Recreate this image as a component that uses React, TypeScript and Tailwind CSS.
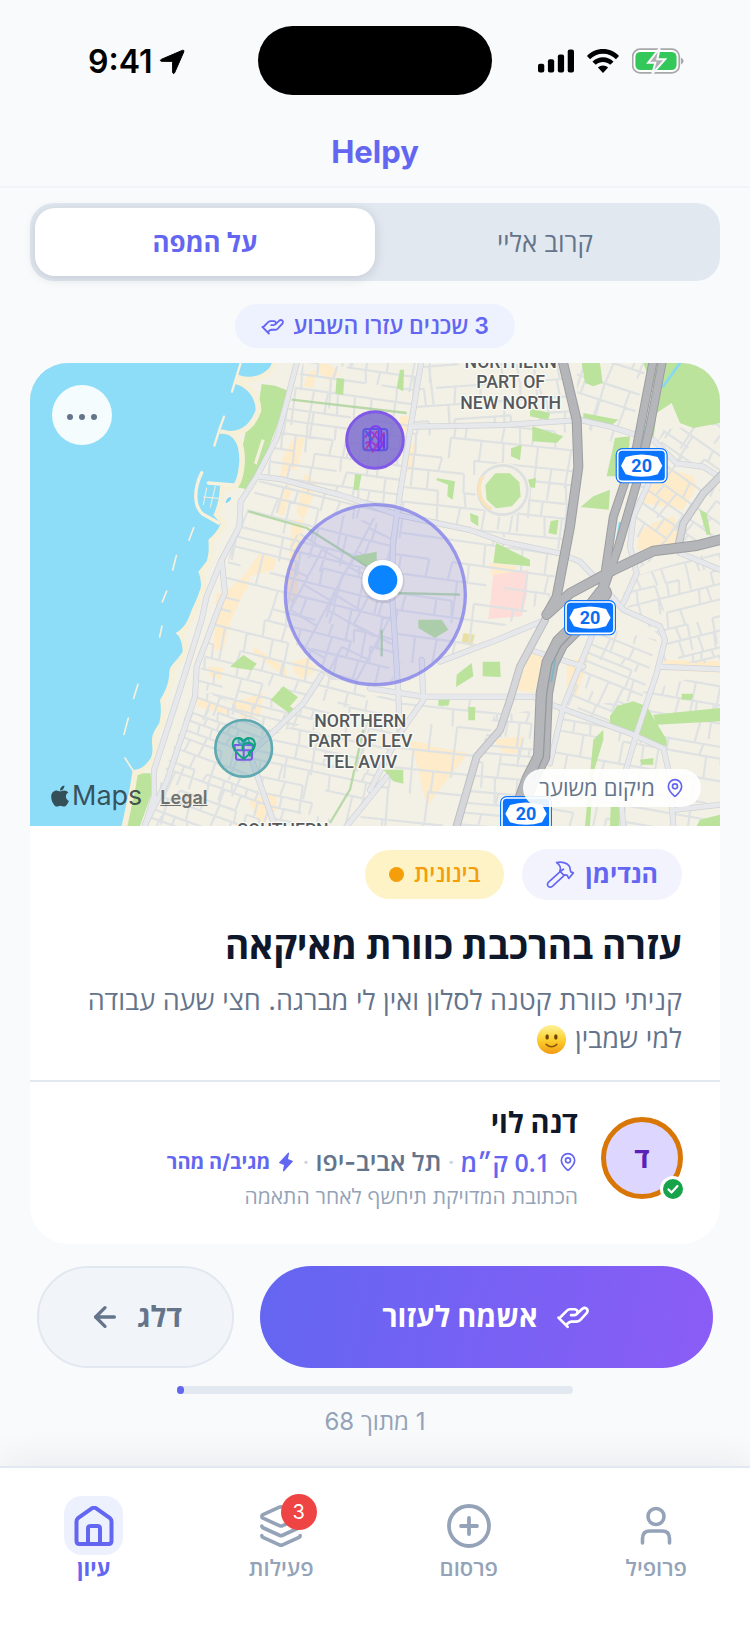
import React from "react";
import { ArrowLeft, CirclePlus, Layers, MapPin } from "lucide-react";
import { PiLightningFill } from "react-icons/pi";
import { FaApple } from "react-icons/fa";

/* ---------- icons ---------- */

function HandIcon({ className }: { className?: string }) {
  return (
    <svg viewBox="588 106 110 78" className={className} fill="none" stroke="currentColor" strokeWidth="8.5" strokeLinecap="round" strokeLinejoin="round" aria-hidden="true">
      <path d="M594 147L624 177" />
      <path d="M601 145L621 125Q626 120 632 120H647Q656 121 656 129Q655 138 646 139H635" />
      <path d="M656 133L672 118Q679 113 686 118Q691 124 687 131L667 153Q661 160 653 160H636Q629 161 624 166L620 170" />
    </svg>
  );
}

function HammerIcon({ className }: { className?: string }) {
  return (
    <svg viewBox="528 47 88 86" className={className} fill="none" stroke="currentColor" strokeWidth="5" strokeLinecap="round" strokeLinejoin="round" aria-hidden="true">
      <path d="M571 81L535 114Q530 121 535 126Q541 131 548 125L585 91" />
      <path d="M560 54C574 50 592 54 599 65C602 71 601 76 603 82L611 85L597 102L592 92L581 91L570 80C574 71 571 61 560 54Z" />
      <path d="M571 81L581 74" />
    </svg>
  );
}

function HomeIcon({ className }: { className?: string }) {
  return (
    <svg viewBox="0 0 40 40" className={className} fill="none" stroke="currentColor" strokeWidth="4" strokeLinejoin="round" strokeLinecap="round" aria-hidden="true">
      <path d="M2.500 15.500Q2.500 13.500 4 12.200L17.800 2.400Q20 1.100 22.200 2.400L36 12.200Q37.500 13.500 37.500 15.500V35Q37.500 38 34.500 38H5.500Q2.500 38 2.500 35Z" />
      <path d="M14 37.500V22.500Q14 20 16.500 20H23.500Q26 20 26 22.500V37.500" />
    </svg>
  );
}

function PersonIcon({ className }: { className?: string }) {
  return (
    <svg viewBox="0 0 40 40" className={className} fill="none" stroke="currentColor" strokeWidth="3.6" strokeLinecap="round" aria-hidden="true">
      <circle cx="20" cy="10.500" r="8" />
      <path d="M6.500 37V32.500Q6.500 25 14 25H26Q33.500 25 33.500 32.500V37" />
    </svg>
  );
}

function SmileIcon({ className }: { className?: string }) {
  return (
    <svg viewBox="0 0 32 32" className={className} role="img" aria-label="🙂">
      <defs>
        <linearGradient id="smile" x1="0" y1="0" x2="0" y2="1">
          <stop offset="0" stopColor="#fdf29a" />
          <stop offset=".5" stopColor="#fcd12f" />
          <stop offset="1" stopColor="#f29a13" />
        </linearGradient>
      </defs>
      <circle cx="16" cy="16" r="15" fill="url(#smile)" />
      <ellipse cx="11.500" cy="13.500" rx="1.800" ry="2.800" fill="#6f4309" />
      <ellipse cx="20.500" cy="13.500" rx="1.800" ry="2.800" fill="#6f4309" />
      <path d="M10.500 21Q16 26 21.500 21" fill="none" stroke="#8a540c" strokeWidth="1.600" strokeLinecap="round" />
    </svg>
  );
}

function StatusIcons() {
  return (
    <div className="flex items-center gap-[13px]">
      <svg viewBox="0 0 109 70" className="h-6 w-9" aria-hidden="true">
        <rect x="0" y="43" width="19" height="27" rx="6" />
        <rect x="30" y="30" width="19" height="40" rx="6" />
        <rect x="60" y="15" width="19" height="55" rx="6" />
        <rect x="90" y="0" width="19" height="70" rx="6" />
      </svg>
      <svg viewBox="0 0 94 70" className="h-6 w-8" aria-hidden="true">
        <path d="M47 0C65 0 82 8 94 20L85 30C75 20 62 14 47 14S19 20 9 30L0 20C12 8 29 0 47 0Z" />
        <path d="M47 24C59 24 70 29 78 37L68 46C62 41 55 38 47 38S32 41 26 46L16 37C24 29 35 24 47 24Z" />
        <path d="M47 48C53 48 58 50 62 54L47 70L32 54C36 50 41 48 47 48Z" />
      </svg>
      <svg viewBox="0 0 154 76" className="h-[26px] w-[52px]" aria-hidden="true">
        <rect x="2" y="3" width="138" height="70" rx="22" fill="#fff" stroke="#a8a8aa" strokeWidth="5" />
        <path d="M145 28Q153 33 153 38T145 48Z" fill="#a8a8aa" />
        <rect x="10" y="11" width="122" height="54" rx="15" fill="#34c759" />
        <path d="M82 0L48 43H69L60 76L98 33H75Z" fill="#b0b0b3" stroke="#f8fafc" strokeWidth="6" />
      </svg>
    </div>
  );
}

/* ---------- map ---------- */

function random(seed: number) {
  let a = seed;
  return () => {
    a = (a * 1664525 + 1013904223) % 4294967296;
    return a / 4294967296;
  };
}

/* Irregular blocks: long rows joined by short cross streets. */
function blockPath(seed: number, size: number, dx: number, dy: number) {
  const r = random(seed);
  const parts: string[] = [];
  let y = -size;
  while (y < size) {
    const next = y + dy * (0.6 + r() * 0.8);
    let x = -size;
    let pen = false;
    while (x < size) {
      const nx = x + dx * (0.5 + r());
      if (r() < 0.84) {
        parts.push(`${pen ? "" : `M${x | 0} ${y | 0}`}L${nx | 0} ${y | 0}`);
        pen = true;
      } else pen = false;
      if (r() < 0.75) {
        const lean = (r() - 0.5) * 16;
        parts.push(`M${nx | 0} ${y | 0}L${(nx + lean) | 0} ${(next + (r() < 0.3 ? dy : 0)) | 0}`);
        pen = false;
      }
      x = nx;
    }
    y = next;
  }
  return parts.join("");
}

const districts = [
  { id: "nw", area: "820,0 1170,0 1105,440 1000,415 700,345", x: 920, y: 220, angle: 8, seed: 7, dx: 58, dy: 48, size: 420 },
  { id: "w", area: "690,350 1000,410 1100,450 1090,900 1000,1010 720,1120 500,960 580,690 600,560", x: 820, y: 700, angle: 14, seed: 21, dx: 70, dy: 42, size: 620 },
  { id: "w2", area: "780,520 1100,450 1090,960 900,950 780,800", x: 950, y: 720, angle: -62, seed: 5, dx: 90, dy: 70, size: 420 },
  { id: "sw", area: "500,960 720,1090 640,1200 740,1389 340,1389 410,1210", x: 560, y: 1200, angle: 20, seed: 33, dx: 46, dy: 36, size: 420 },
  { id: "s", area: "760,1100 1100,980 1110,1130 1040,1240 970,1389 740,1389 670,1180", x: 900, y: 1240, angle: 12, seed: 14, dx: 62, dy: 40, size: 420 },
  { id: "n", area: "1170,0 1600,0 1640,180 1150,195", x: 1400, y: 90, angle: -4, seed: 28, dx: 66, dy: 50, size: 420 },
  { id: "n2", area: "1150,200 1640,180 1640,320 1590,560 1110,455", x: 1380, y: 380, angle: 6, seed: 61, dx: 74, dy: 54, size: 420 },
  { id: "c", area: "1095,460 1590,570 1560,700 1250,900 1095,900", x: 1330, y: 690, angle: 8, seed: 45, dx: 84, dy: 66, size: 420 },
  { id: "sc", area: "1100,1010 1440,1010 1330,1190 1280,1389 980,1389 1060,1200", x: 1220, y: 1220, angle: 6, seed: 52, dx: 90, dy: 74, size: 320 },
  { id: "sc2", area: "1390,1060 1520,1040 1510,1270 1430,1389 1290,1389 1340,1190", x: 1400, y: 1220, angle: 5, seed: 18, dx: 50, dy: 34, size: 320 },
  { id: "ne", area: "1640,0 1850,0 1790,260 1640,180", x: 1740, y: 80, angle: 18, seed: 9, dx: 66, dy: 58, size: 300 },
  { id: "e", area: "1900,200 2070,180 2070,520 1900,570 1790,640 1830,340", x: 1950, y: 400, angle: 35, seed: 3, dx: 60, dy: 52, size: 400 },
  { id: "e2", area: "1780,650 2070,560 2070,900 1890,900 1900,830 1780,720", x: 1950, y: 740, angle: -14, seed: 77, dx: 44, dy: 36, size: 400 },
  { id: "se", area: "1690,790 1880,830 1810,1110 1590,1030", x: 1720, y: 950, angle: 22, seed: 40, dx: 60, dy: 34, size: 320 },
  { id: "se2", area: "1590,1060 2070,920 2070,1389 1540,1389", x: 1840, y: 1230, angle: 10, seed: 66, dx: 76, dy: 52, size: 500 },
];

const parks = [
  "695,63 735,68 775,83 740,191 690,321 650,379 622,373 628,301 650,191 688,111",
  "310,1231 362,1231 365,1291 330,1389 275,1389 300,1281",
  "600,911 640,876 680,902 665,922",
  "722,1010 760,970 804,1003 780,1030 800,1045 784,1055",
  "920,45 942,47 940,96 916,92",
  "975,333 995,336 985,382 970,380",
  "970,580 1040,566 1040,600 1005,610",
  "1655,0 1710,0 1718,60 1690,70 1665,60",
  "1500,136 1560,150 1555,172 1500,160",
  "1507,190 1600,220 1580,240 1507,235",
  "1443,256 1475,245 1470,292 1443,280",
  "1220,345 1275,355 1268,410 1252,400 1254,365 1220,352",
  "1487,352 1518,345 1515,375 1487,370",
  "1562,474 1586,470 1580,515 1555,510",
  "1320,450 1345,460 1345,490 1322,475",
  "1110,20 1122,20 1120,85 1100,75",
  "1690,400 1740,380 1736,440 1652,432",
  "1755,225 1800,220 1790,340 1730,340",
  "1840,0 2070,0 2070,180 1990,195 1950,180 1925,120 1880,150 1870,230 1840,240 1870,80",
  "1660,150 1765,170 1740,190 1660,172",
  "2008,440 2030,450 2042,515 2030,515",
  "1398,540 1500,590 1500,610 1390,600",
  "1165,770 1235,770 1255,800 1215,825 1165,795",
  "1358,896 1410,896 1412,942 1358,940",
  "1280,935 1325,900 1330,940 1278,972",
  "1315,1032 1336,1032 1335,1072 1315,1072",
  "1225,1010 1260,1010 1255,1028 1225,1028",
  "1060,1220 1120,1220 1120,1262 1090,1255",
  "1740,1060 1760,1030 1810,1015 1850,1030 1910,1130 1910,1150 1820,1125 1740,1080",
  "1870,1055 2070,1035 2070,1075 1880,1085",
  "1690,1130 1720,1100 1720,1130 1690,1230 1680,1389 1665,1389",
  "1742,1330 1770,1330 1768,1389 1740,1389",
  "1830,1190 1870,1185 1870,1205 1835,1205",
  "1955,992 1990,992 1985,1010 1955,1010",
  "2010,1370 2070,1355 2070,1389 2000,1389",
];

const tints = [
  "835,30 860,20 850,75 820,70",
  "860,0 900,5 925,30 900,60 870,30",
  "760,280 800,210 790,290 760,350 750,340",
  "800,225 825,225 800,320 782,320",
  "825,330 860,360 850,400 820,470 800,450",
  "770,360 785,380 760,460 742,450",
  "785,470 820,470 800,720 770,720",
  "640,640 690,570 740,590 730,620 660,640 650,680 600,720 550,720",
  "560,690 640,690 600,780 580,860 550,860",
  "500,1005 600,1035 595,1055 500,1030",
  "670,850 770,915 770,945 670,870",
  "790,895 830,885 860,920 820,950 790,925",
  "535,910 580,915 575,950 540,940",
  "600,1020 700,990 690,1060 640,1070",
  "660,1310 740,1290 740,1340 690,1389 660,1320",
  "1110,160 1140,160 1135,200 1110,210",
  "1120,250 1160,240 1150,310 1130,330",
  "1380,600 1460,610 1455,645 1385,640",
  "1910,315 1990,340 2000,370 1960,440 1840,420 1860,350",
  "1870,480 1930,460 1950,500 1940,560 1820,560 1830,500",
  "1500,870 1555,880 1510,990 1460,980",
  "1145,1140 1315,1170 1190,1330",
  "1130,1130 1210,1145 1150,1160",
  "1610,900 1680,870 1640,1000 1610,980",
  "1390,1130 1480,1120 1470,1170 1420,1170",
  "1900,890 2070,895 2070,930 1900,920",
];

const roads = [
  "M800 0L768 125L740 226L680 341L632 416L628 491L575 591L530 700L515 770L440 1011L372 1221L372 1301L345 1389",
  "M575 591L585 690L575 711L500 911L495 1001L410 1256L345 1385",
  "M690 341L750 348L930 396L1020 425L1105 456L1320 501L1420 536L1590 571L1650 596L1720 671L1780 740L1890 790L1905 831L1880 931L1820 1111L1770 1281L1780 1389",
  "M1173 0L1150 141L1110 391L1090 531L1085 681L1095 831L1105 991L1108 1080",
  "M1150 191L1420 186L1650 171L1740 191L1870 231L1940 301L2020 311L2080 350",
  "M1870 331L1810 461L1800 551L1820 631L1780 720",
  "M1020 976L1180 1001L1440 1001L1510 1001L1580 1031L1800 1111L1900 1156L1920 1241L1930 1389",
  "M1685 821L1600 1031L1560 1201",
  "M1230 896L1400 831L1545 771",
  "M1175 890L1180 1011L1110 1111L1020 1281",
  "M875 936L820 1021L720 1116L640 1190",
  "M665 1191L700 1290L735 1389",
  "M1070 1241L950 1389",
  "M1890 911L2070 919",
  "M1500 861L1660 911",
  "M1930 1341L2070 1325",
  "M1950 570L2070 620",
];

function Shield({ x, y }: { x: number; y: number }) {
  return (
    <g transform={`translate(${x} ${y})`}>
      <rect width="156" height="106" rx="20" fill="#0a74ff" />
      <rect x="6" y="6" width="144" height="94" rx="14" fill="none" stroke="#fff" strokeWidth="5" />
      <path d="M30 27Q78 12 126 27L140 53L126 79Q78 94 30 79L16 53Z" fill="#fff" />
      <text x="78" y="72" textAnchor="middle" fontSize="54" fontWeight="700" fill="#0a6cf0">20</text>
    </g>
  );
}

const beach =
  "M725 0C722 20 690 42 655 41C640 41 628 38 622 33L615 63C640 68 677 95 677 141C665 175 640 205 600 204L572 199L568 213C615 208 628 250 628 290C626 330 618 358 608 364L570 369C568 400 565 425 550 456L572 481C565 505 545 520 535 531C538 560 535 580 530 595L505 626C515 650 515 675 508 686C500 710 490 730 485 741C475 770 465 795 436 811C450 815 458 845 458 866C440 895 420 905 418 926C418 950 412 975 390 1011C395 1040 392 1060 388 1080C375 1100 364 1115 366 1140C370 1170 365 1185 355 1195C340 1215 325 1220 308 1221L300 1271L275 1389";

function CityMap() {
  return (
    <svg viewBox="0 0 2070 1389" preserveAspectRatio="xMidYMid slice" className="block h-full w-full font-[Roboto,sans-serif]" role="img" aria-label="Map">
      <defs>
        {districts.map((d) => (
          <clipPath key={d.id} id={`district-${d.id}`}>
            <polygon points={d.area} />
          </clipPath>
        ))}
      </defs>
      <rect width="2070" height="1389" fill="#f3f0e6" />
      <g fill="#fdebca">
        {tints.map((p) => (
          <polygon key={p} points={p} />
        ))}
      </g>
      <path d="M1390 635L1495 620L1490 700L1475 760L1375 768Z" fill="#fedcd8" />
      <path d="M1300 810L1335 815L1325 850L1295 840Z" fill="#e9e0a0" />
      {districts.map((d) => (
        <g key={d.id} clipPath={`url(#district-${d.id})`}>
          <path
            d={blockPath(d.seed, d.size, d.dx, d.dy)}
            transform={`translate(${d.x} ${d.y}) rotate(${d.angle})`}
            fill="none"
            stroke="#dfe2e2"
            strokeWidth="6.5"
            strokeLinejoin="round"
          />
        </g>
      ))}
      <g fill="#bbe39c">
        {parks.map((p) => (
          <polygon key={p} points={p} />
        ))}
      </g>
      <path d="M695 228L672 300L680 305L704 232Z" fill="#f5efe0" />
      <g fill="none" stroke="#a9d39a" strokeWidth="7" opacity=".8">
        <path d="M785 110L1130 150" />
        <path d="M655 445L830 495L1010 610" />
        <path d="M1090 690L1290 695" />
        <path d="M1055 800V880" />
        <path d="M1000 1100L960 1280L900 1380" />
      </g>
      <circle cx="1418" cy="381" r="82" fill="#f3f0e6" />
      <circle cx="1418" cy="381" r="74" fill="none" stroke="#dde0e0" strokeWidth="8" />
      <path d="M1360 340A66 66 0 0 0 1385 438" fill="none" stroke="#fbe3b9" strokeWidth="10" />
      <polygon points="1396,331 1440,331 1468,358 1472,400 1446,430 1398,436 1370,410 1366,366" fill="#bde49e" />

      <path d={`${beach}H0V0Z`} fill="#8ddcf8" stroke="#f7f0d8" strokeWidth="34" />
      <path d={`${beach}H0V0Z`} fill="#8ddcf8" />
      <g fill="none" stroke="#f8f1dc" strokeLinecap="round" strokeLinejoin="round">
        <path d="M632 0L606 86M582 161L568 200L553 248" strokeWidth="7" />
        <path d="M515 329C490 380 492 430 518 453L566 480M535 360L608 366" strokeWidth="10" />
        <path d="M530 375L520 425M556 370L541 432M522 402L565 406" strokeWidth="3" />
        <path d="M491 494L477 532M439 578L428 621M410 684L397 717M396 789L389 822M324 964L311 1006M295 1065L282 1114M285 1185L308 1221" strokeWidth="5" />
      </g>
      <path d="M587 420Q590 402 603 402Q605 412 590 420Z" fill="#7fd4f5" />

      <g fill="none" strokeLinejoin="round" strokeLinecap="round">
        {roads.map((d) => (
          <path key={d} d={d} stroke="#cfd2d5" strokeWidth="18" />
        ))}
        {roads.map((d) => (
          <path key={d} d={d} stroke="#e7e8eb" strokeWidth="14" />
        ))}
        <path d="M2080 330L2020 391L1960 481L1945 550" stroke="#b9bbbf" strokeWidth="24" />
        <path d="M2080 330L2020 391L1960 481L1945 550" stroke="#d6d7da" strokeWidth="18" />
        <path d="M1545 771L1470 911L1440 1011L1410 1101L1340 1181L1280 1389" stroke="#bcbec2" strokeWidth="24" />
        <path d="M1545 771L1470 911L1440 1011L1410 1101L1340 1181L1280 1389" stroke="#d4d6d9" strokeWidth="18" />
        <path d="M1950 0L1900 70M1862 140L1840 230M1770 480L1750 600" stroke="#86d8f4" strokeWidth="8" />
        <g stroke="#9c9da1">
          <path d="M1597 -10L1640 171L1645 311L1620 491L1580 701L1550 755" strokeWidth="30" />
          <path d="M1870 -10L1820 251L1750 461L1725 631L1710 711L1650 781" strokeWidth="27" />
          <path d="M1898 -10L1860 191L1820 361L1765 551L1710 711" strokeWidth="27" />
          <path d="M2080 528L2000 548L1870 564L1750 621L1620 691L1550 755" strokeWidth="32" />
          <path d="M1720 690L1650 781L1590 840L1560 901L1543 991L1535 1181L1500 1250L1450 1389" strokeWidth="52" />
        </g>
        <g stroke="#b5b6ba">
          <path d="M1597 -10L1640 171L1645 311L1620 491L1580 701L1550 755" strokeWidth="24" />
          <path d="M1870 -10L1820 251L1750 461L1725 631L1710 711L1650 781" strokeWidth="21" />
          <path d="M1898 -10L1860 191L1820 361L1765 551L1710 711" strokeWidth="21" />
          <path d="M2080 528L2000 548L1870 564L1750 621L1620 691L1550 755" strokeWidth="26" />
          <path d="M1720 690L1650 781L1590 840L1560 901L1543 991L1535 1181L1500 1250L1450 1389" strokeWidth="46" />
        </g>
        <path d="M1640 800L1592 850L1565 905L1550 991L1540 1181L1510 1250" stroke="#98999d" strokeWidth="4" />
        <path d="M1576 890L1564 955" stroke="#7fb7c9" strokeWidth="6" />
      </g>

      <g fontSize="53" fontWeight="500" fill="#55595c" textAnchor="middle" stroke="#fbfaf4" strokeWidth="8" paintOrder="stroke" strokeLinejoin="round">
        <text x="1442" y="15">NORTHERN</text>
        <text x="1442" y="75">PART OF</text>
        <text x="1442" y="138">NEW NORTH</text>
        <text x="991" y="1092">NORTHERN</text>
        <text x="991" y="1153">PART OF LEV</text>
        <text x="991" y="1214">TEL AVIV</text>
        <text x="759" y="1420">SOUTHERN</text>
      </g>

      <Shield x={1757} y={255} />
      <Shield x={1602} y={711} />
      <Shield x={1410} y={1299} />

      <circle cx="1036" cy="695" r="270" fill="#6366f1" fillOpacity=".17" stroke="#8583ea" strokeOpacity=".8" strokeWidth="10" />
      <circle cx="1058" cy="655" r="66" fill="#000" opacity=".08" />
      <circle cx="1058" cy="651" r="61" fill="#fff" />
      <circle cx="1058" cy="651" r="44" fill="#0a84ff" />

      <circle cx="1035" cy="231" r="85" fill="#7565cc" fillOpacity=".8" stroke="#8059e8" strokeWidth="9" />
      <g fill="none" strokeWidth="6" strokeLinecap="round">
        <rect x="1000" y="198" width="72" height="64" rx="9" stroke="#5b57e0" />
        <path d="M1008 258L1040 206M1028 266L1062 210" stroke="#b0409f" />
        <path d="M1006 222Q1020 196 1034 216T1062 240Q1050 262 1036 246T1008 240" stroke="#9a3ad8" />
        <rect x="1020" y="190" width="34" height="72" rx="16" stroke="#7a3cf0" />
        <path d="M1046 204V262M1062 216V256" stroke="#6a3cf0" />
        <path d="M1008 206L1026 230" stroke="#4a5fd8" />
      </g>

      <circle cx="641" cy="1156" r="85" fill="#5b9bb0" fillOpacity=".34" stroke="#5fa9b3" strokeWidth="8" />
      <g fill="none" strokeWidth="6" strokeLinejoin="round" strokeLinecap="round">
        <path d="M614 1146H668V1162H614ZM618 1162V1184Q618 1190 624 1190H660Q666 1190 666 1184V1162M641 1146V1190" stroke="#7c5ae8" />
        <path d="M641 1146Q622 1142 626 1130T641 1146Q660 1142 656 1130T641 1146" stroke="#4aa0c0" />
        <path d="M641 1188Q608 1162 608 1144Q609 1126 625 1125Q636 1125 641 1135Q646 1125 657 1125Q674 1126 675 1144Q675 1162 641 1188Z" stroke="#10a37f" />
        <path d="M638 1160Q634 1142 652 1140T672 1154Q668 1164 656 1168L660 1178" stroke="#10a37f" />
      </g>
    </svg>
  );
}

function MapPanel() {
  return (
    <div className="relative h-[463px]">
      <CityMap />
      <button type="button" aria-label="עוד" className="absolute left-[22px] top-[22px] flex size-[60px] items-center justify-center gap-1.5 rounded-full bg-white/90 pt-1">
        <span className="size-1.5 rounded-full bg-[#64748b]" />
        <span className="size-1.5 rounded-full bg-[#64748b]" />
        <span className="size-1.5 rounded-full bg-[#64748b]" />
      </button>
      <div dir="ltr" className="absolute bottom-3 left-[18px] flex items-center gap-[18px] text-[#1e2c30]/80">
        <span className="flex items-center font-[Inter,sans-serif] text-[27px] leading-9">
          <FaApple className="size-6 shrink-0" aria-hidden="true" />
          Maps
        </span>
        <a href="#legal" className="pt-1 text-[18px] font-semibold leading-6 text-[#4b4f4c]/80 underline">Legal</a>
      </div>
      <div className="absolute bottom-[19px] right-[19px] flex h-[38px] items-center gap-2.5 rounded-full bg-white/90 px-4 text-[22px] font-medium text-[#64748b]">
        <MapPin className="size-5 text-[#6366f1]" strokeWidth={2} aria-hidden="true" />
        מיקום משוער
      </div>
    </div>
  );
}

/* ---------- page ---------- */

function NavItem({ label, active, children }: { label: string; active?: boolean; children: React.ReactNode }) {
  return (
    <a href={`#${label}`} aria-current={active ? "page" : undefined} className={`flex flex-1 flex-col items-center ${active ? "text-[#6366f1]" : "text-[#94a3b8]"}`}>
      <span className={`relative flex size-[59px] items-center justify-center rounded-[18px] ${active ? "bg-[#edf1fe]" : ""}`}>{children}</span>
      <span className={`text-[22px] leading-[26px] ${active ? "font-bold" : "font-semibold"}`}>{label}</span>
    </a>
  );
}

export default function App() {
  return (
    <div dir="rtl" className="flex min-h-screen flex-col bg-[#f8fafc] font-[Inter,'Open_Sans',sans-serif] text-[#0f172a]">
      <div dir="ltr" className="grid h-[120px] grid-cols-[1fr_auto_1fr] items-center text-black">
        <div className="flex items-center gap-1.5 pl-[88px] pt-1">
          <span className="text-[32px] font-semibold">9:41</span>
          <svg viewBox="-1 -1 26 26" className="size-[26px]" stroke="currentColor" strokeLinejoin="round" aria-hidden="true">
            <path d="M22.500 .300Q24.400 -.100 23.800 1.800L14.600 22.800Q13.500 24.600 12.600 22.600V12.200Q12.600 11.400 11.800 11.400L1.300 11.300Q-.700 10.600 1.200 9.400Z" />
          </svg>
        </div>
        <div className="h-[69px] w-[234px] rounded-full bg-black" />
        <div className="flex justify-end pr-[66px] pt-0.5">
          <StatusIcons />
        </div>
      </div>

      <header className="flex h-[68px] items-center justify-center border-b-2 border-[#f1f5f9]">
        <h1 className="pb-px text-[31px] font-bold text-[#6366f1]">Helpy</h1>
      </header>

      <main className="flex flex-col items-center px-[30px] pb-[27px] pt-[15px]">
        <div role="tablist" className="flex h-[78px] w-full rounded-[24px] bg-[#e2e8f0] p-[5px] text-[26px]">
          <button type="button" role="tab" aria-selected="false" className="flex-1 font-medium text-[#64748b]">קרוב אליי</button>
          <button type="button" role="tab" aria-selected="true" className="flex-1 rounded-[20px] bg-white font-bold text-[#6366f1] shadow-[0_2px_12px_rgba(15,23,42,0.15)]">על המפה</button>
        </div>

        <p className="mt-[23px] flex h-11 items-center gap-2 rounded-full bg-[#eef2ff] px-[26px] text-[23px] font-semibold text-[#6366f1]">
          3 שכנים עזרו השבוע
          <HandIcon className="h-[17px] w-6" />
        </p>

        <article className="mt-[15px] w-full overflow-hidden rounded-[38px] bg-white">
          <MapPanel />
          <div className="px-[38px] pb-[22px] pt-[23px]">
            <div className="flex items-center gap-[18px]">
              <span className="flex h-[51px] items-center gap-2.5 rounded-full bg-[#f3f3fe] px-6 text-[25px] font-bold text-[#6366f1]">
                הנדימן
                <HammerIcon className="size-[29px]" />
              </span>
              <span className="flex h-[49px] items-center gap-2.5 rounded-full bg-[#fef3c7] px-6 text-[23px] font-semibold text-[#f59e0b]">
                בינונית
                <span className="size-[15px] rounded-full bg-[#f59e0b]" />
              </span>
            </div>
            <h2 className="mt-[22px] text-[37px] font-bold leading-[48px]">עזרה בהרכבת כוורת מאיקאה</h2>
            <p className="mt-3 text-[27px] leading-[38px] text-[#64748b]">
              קניתי כוורת קטנה לסלון ואין לי מברגה. חצי שעה עבודה למי שמבין{" "}
              <SmileIcon className="inline-block size-[31px] align-text-bottom" />
            </p>
          </div>
          <div className="flex items-center gap-[23px] border-t-2 border-[#e2e8f0] px-[37px] pb-[31px] pt-[21px]">
            <div className="relative flex size-[82px] shrink-0 items-center justify-center rounded-full border-[5px] border-[#d97706] bg-[#ddd6fe] text-[28px] font-bold text-[#5b21b6]">
              ד
              <svg viewBox="0 0 26 26" className="absolute -bottom-2 -right-2 size-[26px]" aria-hidden="true">
                <circle cx="13" cy="13" r="13" fill="#fff" />
                <circle cx="13" cy="13" r="10" fill="#16a34a" />
                <path d="M8.500 13.500L11.500 16.500L17.500 10" fill="none" stroke="#fff" strokeWidth="2.200" strokeLinecap="round" strokeLinejoin="round" />
              </svg>
            </div>
            <div className="min-w-0">
              <h3 className="text-[29px] font-bold leading-10">דנה לוי</h3>
              <p className="flex items-center gap-1.5 text-[25px] leading-[38px]">
                <span className="flex items-center gap-2 font-['Liberation_Sans','Open_Sans',sans-serif] font-medium text-[#6366f1]">
                  <MapPin className="size-5" strokeWidth={2} aria-hidden="true" />
                  <span className="font-['Open_Sans',sans-serif] font-semibold">0.1 ק״מ</span>
                </span>
                <span className="text-[#cbd5e1]">·</span>
                <span className="font-semibold text-[#64748b]">תל אביב-יפו</span>
                <span className="text-[#cbd5e1]">·</span>
                <span className="flex items-center gap-1.5 text-[20px] font-bold text-[#6366f1]">
                  <PiLightningFill className="size-5" aria-hidden="true" />
                  מגיב/ה מהר
                </span>
              </p>
              <p className="text-[21px] leading-8 text-[#94a3b8]">הכתובת המדויקת תיחשף לאחר התאמה</p>
            </div>
          </div>
        </article>

        <div className="mt-[22px] flex w-full gap-[26px] px-[7px]">
          <button type="button" className="flex h-[102px] flex-1 items-center justify-center gap-[18px] rounded-full bg-[linear-gradient(100deg,#6366f1,#8b5cf6)] text-[29px] font-bold text-white">
            <HandIcon className="h-6 w-[35px]" />
            אשמח לעזור
          </button>
          <button type="button" className="flex h-[102px] w-[197px] items-center justify-center gap-4 rounded-full border-2 border-[#e2e8f0] bg-[#f1f5f9] text-[29px] font-bold text-[#64748b]">
            דלג
            <ArrowLeft className="size-8" strokeWidth={2.5} aria-hidden="true" />
          </button>
        </div>

        <div dir="ltr" className="mt-[18px] h-2 w-[396px] rounded-full bg-[#e2e8f0]">
          <div className="h-2 w-[7px] rounded-full bg-[#6366f1]" />
        </div>
        <p className="mt-[11px] text-[24px] leading-[34px] text-[#94a3b8]">1 מתוך 68</p>
      </main>

      <nav className="mt-auto flex border-t-2 border-[#e2e8f0] bg-white pb-[49px] pt-[28px] shadow-[0_-8px_32px_rgba(15,23,42,0.06)]">
        <NavItem label="פרופיל">
          <PersonIcon className="size-10" />
        </NavItem>
        <NavItem label="פרסום">
          <CirclePlus className="size-12" strokeWidth={1.9} aria-hidden="true" />
        </NavItem>
        <NavItem label="פעילות">
          <Layers className="size-[46px]" strokeWidth={1.9} aria-hidden="true" />
          <span className="absolute -right-1.5 -top-0.5 flex size-9 items-center justify-center rounded-full bg-[#ef4444] text-[20px] text-white">3</span>
        </NavItem>
        <NavItem label="עיון" active>
          <HomeIcon className="size-10" />
        </NavItem>
      </nav>
    </div>
  );
}
